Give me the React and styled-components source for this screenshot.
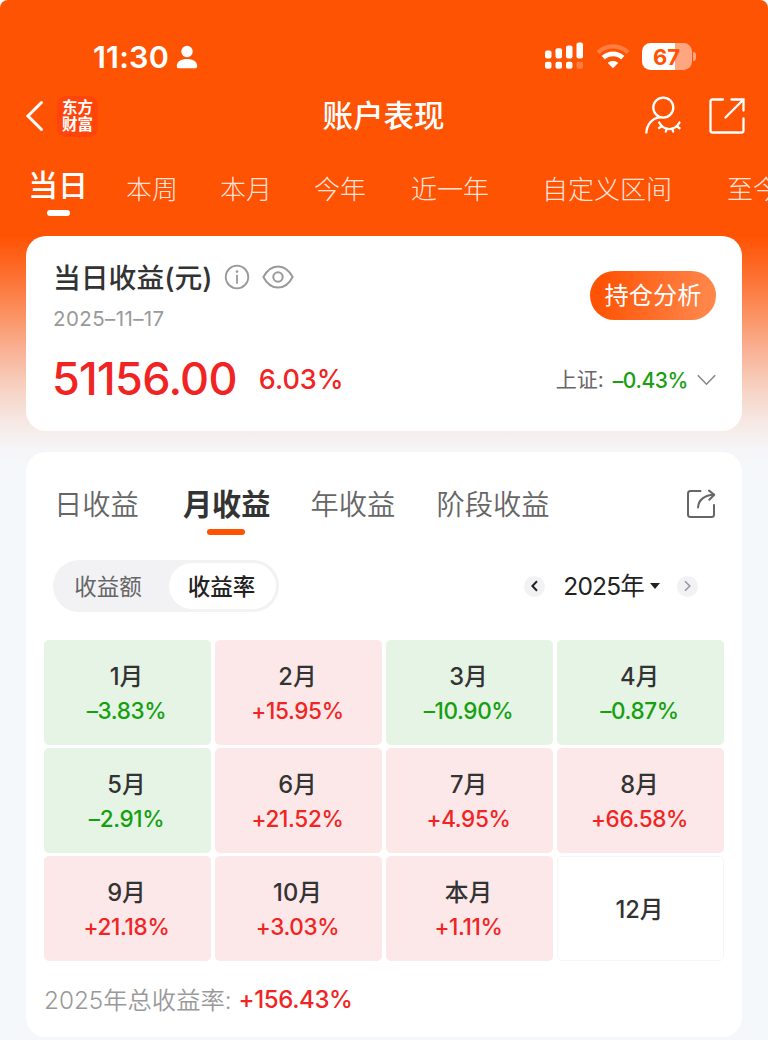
import { useState } from "react";
import styled, { createGlobalStyle, css } from "styled-components";

const ranges = [
  { name: "当日", gap: 0 },
  { name: "本周", gap: 38 },
  { name: "本月", gap: 42 },
  { name: "今年", gap: 42 },
  { name: "近一年", gap: 45 },
  { name: "自定义区间", gap: 53 },
  { name: "至今", gap: 55 },
];

const periods = [
  { name: "日收益", gap: 0 },
  { name: "月收益", gap: 44 },
  { name: "年收益", gap: 40 },
  { name: "阶段收益", gap: 41 },
];

const months = [
  { label: "1月", value: -3.83 },
  { label: "2月", value: 15.95 },
  { label: "3月", value: -10.9 },
  { label: "4月", value: -0.87 },
  { label: "5月", value: -2.91 },
  { label: "6月", value: 21.52 },
  { label: "7月", value: 4.95 },
  { label: "8月", value: 66.58 },
  { label: "9月", value: 21.18 },
  { label: "10月", value: 3.03 },
  { label: "本月", value: 1.11 },
  { label: "12月", value: null },
];

const format = (value) =>
  (value < 0 ? "–" : "+") + Math.abs(value).toFixed(2) + "%";

const PersonIcon = () => (
  <svg width="22" height="24" viewBox="0 0 22 24" fill="#fff">
    <circle cx="11" cy="6.500" r="5.700" />
    <path d="M.8 21C.8 16.600 5.300 14 11 14s10.200 2.600 10.200 7c0 1.600-.8 2.300-2 2.300H2.800c-1.200 0-2-.7-2-2.300z" />
  </svg>
);

const SignalIcon = () => (
  <svg width="40" height="28" viewBox="0 0 40 28" fill="#fff">
    <rect x="1" y="8.500" width="6.500" height="8" rx="2" />
    <rect x="11.500" y="6.200" width="6.500" height="10.300" rx="2" />
    <rect x="22" y="3.500" width="6.500" height="13" rx="2" />
    <rect x="32.500" y="0.500" width="6.500" height="16" rx="2" />
    <rect x="1" y="19.700" width="6.500" height="7" rx="2" />
    <rect x="11.500" y="19.700" width="6.500" height="7" rx="2" />
    <rect x="22" y="19.700" width="6.500" height="7" rx="2" />
    <rect x="32.500" y="19.700" width="6.500" height="7" rx="2" opacity="0.25" />
  </svg>
);

const WifiIcon = () => (
  <svg width="34" height="26" viewBox="0 0 34 26" fill="none" stroke="#fff">
    <path d="M2 9.500C10.300 1.300 23.700 1.300 32 9.500" strokeWidth="4.200" opacity="0.25" />
    <path d="M7.300 14.800C12.700 9.600 21.300 9.600 26.700 14.800" strokeWidth="4.800" />
    <path d="M17 25.200l-5.200-5.300c3-2.500 7.400-2.500 10.400 0z" fill="#fff" stroke="none" />
  </svg>
);

const BackIcon = () => (
  <svg width="20" height="32" viewBox="0 0 20 32" fill="none" stroke="#fff" strokeWidth="3">
    <path d="M16.500 2.500L3 16l13.500 13.500" strokeLinecap="round" strokeLinejoin="miter" />
  </svg>
);

const HiddenUserIcon = () => (
  <svg width="38" height="40" viewBox="0 0 38 40" fill="none" stroke="#fff" strokeWidth="2.300" strokeLinecap="round">
    <circle cx="19.300" cy="11.600" r="10" />
    <path d="M2.300 36.700C2.900 28.500 8 22 16 21.300" />
    <path d="M15.200 26.500c4.600 8.600 15.600 8.800 20.300 0" />
    <path d="M18 30.200l-3 1.800M22.800 32.600l-1 3M28.200 32.600l1 3M32.800 30.200l2.800 2" />
  </svg>
);

const OpenIcon = () => (
  <svg width="38" height="38" viewBox="0 0 38 38" fill="none" stroke="#fff" strokeWidth="2.300" strokeLinecap="round">
    <path d="M15 2.500H4.500Q2.500 2.500 2.500 4.500v29q0 2 2 2h29q2 0 2-2V21.500" />
    <path d="M23.500 2.500H35.500v11" strokeLinejoin="miter" />
    <path d="M35 3L17.500 20.500" />
  </svg>
);

const InfoIcon = () => (
  <svg width="26" height="26" viewBox="0 0 26 26" fill="none" stroke="#999" strokeWidth="1.800">
    <circle cx="13" cy="13" r="11.300" />
    <path d="M13 11.500V19" strokeLinecap="round" />
    <circle cx="13" cy="7.600" r="1.300" fill="#999" stroke="none" />
  </svg>
);

const EyeIcon = () => (
  <svg width="32" height="24" viewBox="0 0 32 24" fill="none" stroke="#999" strokeWidth="2">
    <path d="M1.400 12C5 5 10.200 1.400 16 1.400S27 5 30.600 12C27 19 21.800 22.600 16 22.600S5 19 1.400 12z" strokeLinejoin="round" />
    <circle cx="16" cy="12" r="4.700" />
  </svg>
);

const DownIcon = () => (
  <svg width="19" height="12" viewBox="0 0 19 12" fill="none" stroke="#888" strokeWidth="1.600">
    <path d="M.8 1.200l8.700 9 8.700-9" />
  </svg>
);

const ShareIcon = () => (
  <svg width="30" height="30" viewBox="0 0 30 30" fill="none" stroke="#666" strokeWidth="2" strokeLinecap="round" strokeLinejoin="round">
    <path d="M14.500 2H4.500Q2 2 2 4.500v21Q2 28 4.500 28h21q2.500 0 2.500-2.500V16" />
    <path d="M12 18.500C12.500 11 18.500 6 28 5.700" />
    <path d="M23 1.600l5.300 4.100-5 5" />
  </svg>
);

const StepIcon = ({ next }) => (
  <svg width="7" height="12" viewBox="0 0 7 12" fill="none" stroke={next ? "#999" : "#222"} strokeWidth={next ? 1.6 : 2}>
    <path d={next ? "M1 1.200l4.800 4.800L1 10.800" : "M6 1.200L1.400 6 6 10.800"} />
  </svg>
);

const App = () => {
  const [range, setRange] = useState("当日");
  const [period, setPeriod] = useState("月收益");
  const [mode, setMode] = useState("收益率");

  return (
    <>
      <GlobalStyle />
      <Page>
        <StatusBar>
          <Clock>11:30</Clock>
          <PersonIcon />
          <StatusRight>
            <SignalIcon />
            <WifiIcon />
            <Battery>
              <Level>67</Level>
              <Cap />
            </Battery>
          </StatusRight>
        </StatusBar>

        <NavBar>
          <NavSide>
            <BackIcon />
            <Brand>
              <span>东方</span>
              <span>财富</span>
            </Brand>
          </NavSide>
          <Title>账户表现</Title>
          <NavSide $end>
            <HiddenUserIcon />
            <OpenIcon />
          </NavSide>
        </NavBar>

        <RangeTabs>
          {ranges.map((item) => (
            <RangeTab
              key={item.name}
              $gap={item.gap}
              $active={item.name === range}
              onClick={() => setRange(item.name)}
            >
              {item.name}
            </RangeTab>
          ))}
        </RangeTabs>

        <SummaryCard>
          <SummaryLeft>
            <SummaryTitle>
              <span>当日收益(元)</span>
              <InfoIcon />
              <EyeIcon />
            </SummaryTitle>
            <DateText>2025–11–17</DateText>
            <Profit>
              <Amount>51156.00</Amount>
              <Rate>6.03%</Rate>
            </Profit>
          </SummaryLeft>
          <SummaryRight>
            <AnalyseButton>持仓分析</AnalyseButton>
            <IndexRow>
              <IndexName>上证:</IndexName>
              <IndexValue>–0.43%</IndexValue>
              <DownIcon />
            </IndexRow>
          </SummaryRight>
        </SummaryCard>

        <DetailCard>
          <PeriodTabs>
            {periods.map((item) => (
              <PeriodTab
                key={item.name}
                $gap={item.gap}
                $active={item.name === period}
                onClick={() => setPeriod(item.name)}
              >
                {item.name}
              </PeriodTab>
            ))}
            <ShareButton>
              <ShareIcon />
            </ShareButton>
          </PeriodTabs>

          <Toolbar>
            <Switch>
              {["收益额", "收益率"].map((name) => (
                <SwitchItem key={name} $active={name === mode} onClick={() => setMode(name)}>
                  {name}
                </SwitchItem>
              ))}
            </Switch>
            <YearPicker>
              <Step>
                <StepIcon />
              </Step>
              <Year>
                2025年
                <Caret />
              </Year>
              <Step>
                <StepIcon next />
              </Step>
            </YearPicker>
          </Toolbar>

          <MonthGrid>
            {months.map((item) => (
              <MonthCell key={item.label} $value={item.value}>
                <MonthName>{item.label}</MonthName>
                {item.value !== null && (
                  <MonthValue $down={item.value < 0}>{format(item.value)}</MonthValue>
                )}
              </MonthCell>
            ))}
          </MonthGrid>

          <Total>
            <TotalLabel>2025年总收益率:</TotalLabel>
            <TotalValue>+156.43%</TotalValue>
          </Total>
        </DetailCard>
      </Page>
    </>
  );
};

const red = "#f12424";
const green = "#16a010";

const GlobalStyle = createGlobalStyle`
  * {
    box-sizing: border-box;
  }

  body {
    margin: 0;
    background: #fff;
    font-family: Inter, "Noto Sans CJK SC", sans-serif;
  }

  button {
    border: none;
    padding: 0;
    background: none;
    font-family: inherit;
    white-space: nowrap;
  }

  svg {
    display: block;
    flex-shrink: 0;
  }
`;

const Page = styled.div`
  width: 768px;
  height: 1040px;
  overflow: hidden;
  border-radius: 8px 8px 0 0;
  background: linear-gradient(
    #ff5304 0,
    #ff5304 236px,
    #fd6b29 270px,
    #fb8e5c 310px,
    #f9b194 350px,
    #f7d3c5 390px,
    #f6eae7 425px,
    #f6f5f8 450px,
    #f4f8fa 475px
  );
`;

const StatusBar = styled.div`
  display: flex;
  align-items: center;
  height: 84px;
  padding: 30px 72px 0 93px;
`;

const Clock = styled.div`
  width: 83px;
  color: #fff;
  font-size: 30.5px;
  font-weight: 600;
  letter-spacing: 0.2px;
  line-height: 40px;
`;

const StatusRight = styled.div`
  display: flex;
  align-items: center;
  margin: -2px 0 0 auto;
  gap: 12px;
`;

const Battery = styled.div`
  display: flex;
  align-items: center;
  gap: 1.5px;
`;

const Level = styled.div`
  width: 50px;
  height: 27px;
  border-radius: 8.5px;
  background: linear-gradient(to right, #fff 67%, #ffa680 67%);
  color: #ff5304;
  font-size: 22px;
  font-weight: 700;
  line-height: 28px;
  text-align: center;
`;

const Cap = styled.div`
  width: 3px;
  height: 9px;
  border-radius: 0 3px 3px 0;
  background: #ffa680;
`;

const NavBar = styled.div`
  display: flex;
  align-items: center;
  justify-content: space-between;
  height: 64px;
  padding: 0 22px 0 25px;
`;

const NavSide = styled.div`
  display: flex;
  align-items: center;
  justify-content: ${(props) => (props.$end ? "flex-end" : "flex-start")};
  width: 170px;
  gap: ${(props) => (props.$end ? "26px" : "12px")};
`;

const Brand = styled.div`
  display: flex;
  flex-direction: column;
  align-items: center;
  justify-content: center;
  width: 41px;
  height: 41px;
  border-radius: 9px;
  background: #ff450c;
  color: #fff;
  font-size: 15.5px;
  font-weight: 600;
  line-height: 17.5px;
`;

const Title = styled.div`
  margin-right: 4px;
  color: #fff;
  font-size: 30.5px;
  font-weight: 500;
  line-height: 44px;
`;

const RangeTabs = styled.div`
  display: flex;
  height: 88px;
  padding: 12px 0 0 28px;
  overflow: hidden;
`;

const RangeTab = styled.button`
  flex-shrink: 0;
  display: flex;
  flex-direction: column;
  align-items: center;
  height: 60px;
  margin-left: ${(props) => props.$gap}px;
  color: rgba(255, 255, 255, 0.86);
  font-size: 26px;
  font-weight: 300;
  line-height: 60px;

  ${(props) =>
    props.$active &&
    css`
      color: #fff;
      font-size: 30px;
      font-weight: 500;
      line-height: 50px;

      &::after {
        content: "";
        width: 23px;
        height: 5.5px;
        border-radius: 3px;
        background: #fff;
      }
    `}
`;

const card = css`
  width: 716px;
  margin-left: 26px;
  border-radius: 20px;
  background: #fff;
`;

const SummaryCard = styled.section`
  ${card}
  display: flex;
  justify-content: space-between;
  height: 194.5px;
  padding: 19px 26px 0 27px;
`;

const SummaryLeft = styled.div`
  display: flex;
  flex-direction: column;
`;

const SummaryTitle = styled.div`
  display: flex;
  align-items: center;
  height: 42px;
  color: #333;
  font-size: 27.8px;
  font-weight: 500;

  svg {
    margin: 1px 0 0 12px;
  }
`;

const DateText = styled.div`
  height: 43px;
  color: #999;
  font-size: 20.5px;
  font-weight: 400;
  letter-spacing: 0.4px;
  line-height: 43px;
`;

const Profit = styled.div`
  display: flex;
  align-items: center;
  height: 76px;
  margin-left: -1px;
  color: ${red};
`;

const Amount = styled.span`
  font-size: 45px;
  font-weight: 500;
  letter-spacing: -0.7px;
`;

const Rate = styled.span`
  margin-left: 22px;
  padding-top: 3px;
  font-size: 27px;
  font-weight: 500;
`;

const SummaryRight = styled.div`
  display: flex;
  flex-direction: column;
  align-items: flex-end;
  padding-top: 15.5px;
`;

const AnalyseButton = styled.button`
  width: 126px;
  height: 49px;
  border-radius: 25px;
  background: linear-gradient(100deg, #ff5304 10%, #ff8549 90%);
  color: #fff;
  font-size: 24.2px;
  font-weight: 400;
  line-height: 50px;
`;

const IndexRow = styled.div`
  display: flex;
  align-items: center;
  height: 32px;
  margin-top: 44.5px;
`;

const IndexName = styled.span`
  color: #666;
  font-size: 21px;
  line-height: 30px;
  margin-top: -1px;
`;

const IndexValue = styled.span`
  margin: 0 9px;
  color: ${green};
  font-size: 21px;
  font-weight: 500;
  letter-spacing: -0.4px;
`;

const DetailCard = styled.section`
  ${card}
  height: 584.5px;
  margin-top: 21.5px;
  padding: 28px 18px 0;
`;

const PeriodTabs = styled.div`
  display: flex;
  height: 60px;
  padding: 0 8px 0 10px;
`;

const PeriodTab = styled.button`
  display: flex;
  flex-direction: column;
  align-items: center;
  height: 56px;
  margin-left: ${(props) => props.$gap}px;
  color: #666;
  font-size: 28.3px;
  font-weight: 350;
  line-height: 50px;

  ${(props) =>
    props.$active &&
    css`
      color: #333;
      font-size: 29.2px;
      font-weight: 700;

      &::after {
        content: "";
        width: 38px;
        height: 6px;
        margin: -1px 2px 0 0;
        border-radius: 3px;
        background: #ff5304;
      }
    `}
`;

const ShareButton = styled.button`
  height: 30px;
  margin: 9px 0 0 auto;
`;

const Toolbar = styled.div`
  display: flex;
  align-items: center;
  justify-content: space-between;
  height: 52px;
  margin-top: 20px;
  padding: 0 26px 0 9px;
`;

const Switch = styled.div`
  display: flex;
  align-items: center;
  width: 226px;
  height: 52px;
  padding: 3px;
  border-radius: 26px;
  background: #f2f2f5;
`;

const SwitchItem = styled.button`
  flex: 1;
  height: 46px;
  padding-right: 9px;
  border-radius: 23px;
  color: #666;
  font-size: 22.5px;
  line-height: 48px;

  ${(props) =>
    props.$active &&
    css`
      flex: none;
      width: 107px;
      padding-right: 2px;
      background: #fff;
      color: #222;
      font-weight: 500;
    `}
`;

const YearPicker = styled.div`
  display: flex;
  align-items: center;
`;

const Step = styled.button`
  display: flex;
  align-items: center;
  justify-content: center;
  width: 21px;
  height: 21px;
  border-radius: 50%;
  background: #f2f2f5;
`;

const Year = styled.div`
  display: flex;
  align-items: center;
  margin: 0 17px 0 18px;
  color: #222;
  font-size: 24.5px;
  letter-spacing: -0.8px;
  line-height: 40px;
`;

const Caret = styled.span`
  margin-left: 6px;
  border: 5.5px solid transparent;
  border-top: 6px solid #222;
  border-bottom: none;
`;

const MonthGrid = styled.div`
  display: grid;
  grid-template-columns: repeat(4, 1fr);
  grid-auto-rows: 104.5px;
  gap: 3.5px 4px;
  margin-top: 28px;
`;

const MonthCell = styled.div`
  display: flex;
  flex-direction: column;
  align-items: center;
  justify-content: center;
  padding: 3px 2px 0 0;
  border-radius: 5px;
  background: ${(props) => (props.$value < 0 ? "#e5f4e5" : "#fce8e8")};

  ${(props) =>
    props.$value === null &&
    css`
      border: 1px solid #f5f5f5;
      background: #fff;
    `}
`;

const MonthName = styled.div`
  color: #333;
  font-size: 23.7px;
  font-weight: 500;
  line-height: 34px;
`;

const MonthValue = styled.div`
  color: ${(props) => (props.$down ? green : red)};
  font-size: 22.5px;
  font-weight: 500;
  letter-spacing: -0.35px;
  line-height: 34px;
`;

const Total = styled.div`
  display: flex;
  align-items: center;
  height: 40px;
  margin-top: 18px;
`;

const TotalLabel = styled.span`
  color: #999;
  font-size: 24.3px;
  font-weight: 350;
`;

const TotalValue = styled.span`
  margin: 2px 0 0 7px;
  color: ${red};
  font-size: 24px;
  font-weight: 500;
  letter-spacing: -0.4px;
`;

export default App;
